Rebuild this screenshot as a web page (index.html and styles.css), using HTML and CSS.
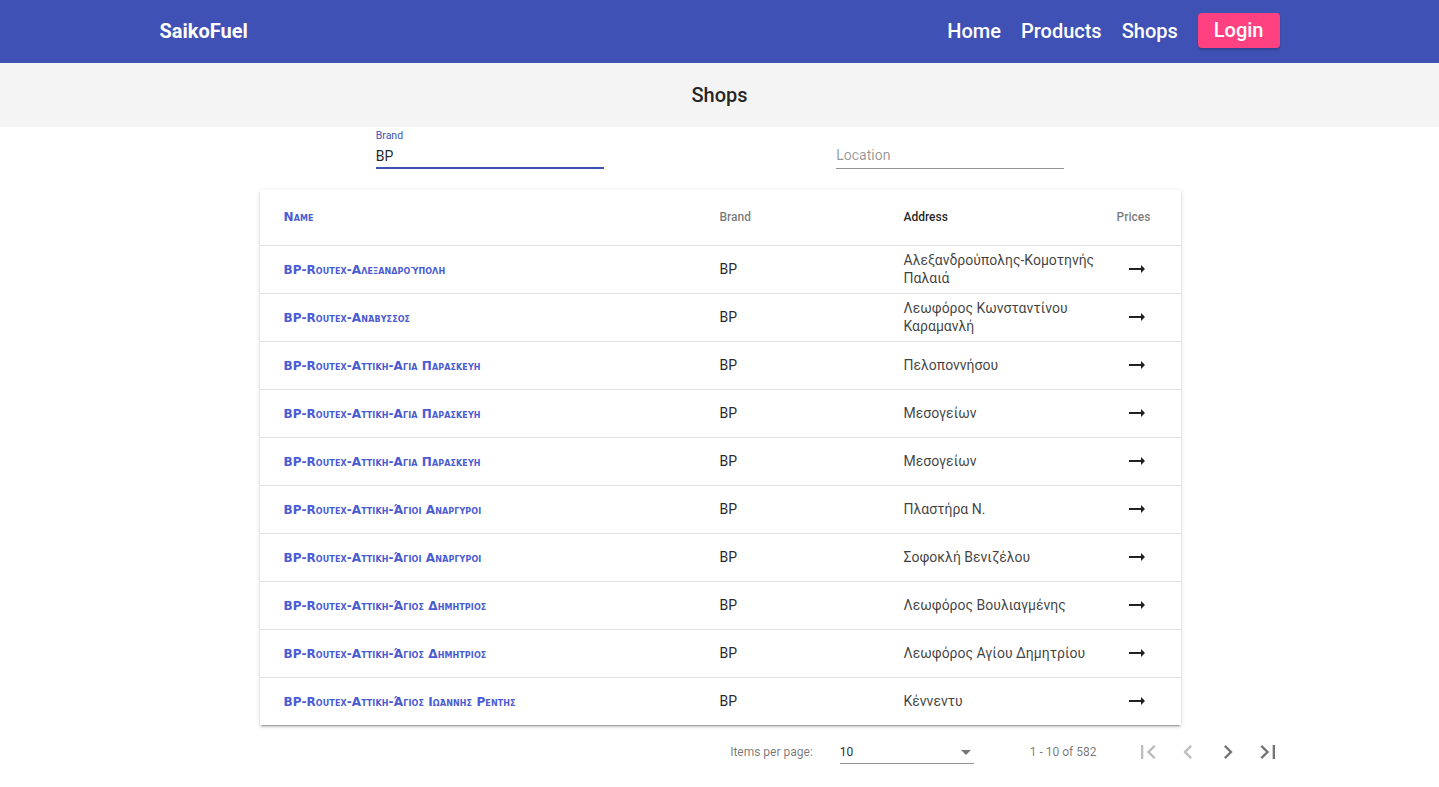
FILE: index.html
```html
<!DOCTYPE html>
<html lang="en">
<head>
<meta charset="utf-8">
<title>SaikoFuel - Shops</title>
<link rel="stylesheet" href="styles.css">
</head>
<body>
<header class="navbar">
  <div class="container nav-inner">
    <a class="brand" href="#">SaikoFuel</a>
    <nav class="nav-links">
      <a href="#">Home</a>
      <a href="#">Products</a>
      <a href="#">Shops</a>
      <a href="#" class="login">Login</a>
    </nav>
  </div>
</header>

<section class="title-band"><h1>Shops</h1></section>

<main class="main">
<div class="filters">
  <div class="filter-cell">
    <div class="field active">
      <span class="field-label">Brand</span>
      <div class="field-input">BP</div>
    </div>
  </div>
  <div class="filter-cell">
    <div class="field">
      <span class="field-label"></span>
      <div class="field-input placeholder">Location</div>
    </div>
  </div>
</div>

<div class="card">
  <table class="shops">
    <colgroup>
      <col class="c-name"><col class="c-brand"><col class="c-addr"><col class="c-price">
    </colgroup>
    <thead>
      <tr>
        <th class="h-name">Name</th>
        <th class="h-brand">Brand</th>
        <th class="h-addr">Address</th>
        <th class="h-price">Prices</th>
      </tr>
    </thead>
    <tbody>
      <tr><td class="name"><a href="#">BP-Routex-Αλεξανδρούπολη</a></td><td>BP</td><td class="addr">Αλεξανδρούπολης-Κομοτηνής Παλαιά</td><td class="price"><svg viewBox="0 0 24 24"><path d="M16.01 11H4v2h12.01v3L20 12l-3.99-4z"/></svg></td></tr>
      <tr><td class="name"><a href="#">BP-Routex-Ανάβυσσος</a></td><td>BP</td><td class="addr">Λεωφόρος Κωνσταντίνου Καραμανλή</td><td class="price"><svg viewBox="0 0 24 24"><path d="M16.01 11H4v2h12.01v3L20 12l-3.99-4z"/></svg></td></tr>
      <tr><td class="name"><a href="#">BP-Routex-Αττικη-Αγια Παρασκευη</a></td><td>BP</td><td class="addr">Πελοποννήσου</td><td class="price"><svg viewBox="0 0 24 24"><path d="M16.01 11H4v2h12.01v3L20 12l-3.99-4z"/></svg></td></tr>
      <tr><td class="name"><a href="#">BP-Routex-Αττικη-Αγια Παρασκευη</a></td><td>BP</td><td class="addr">Μεσογείων</td><td class="price"><svg viewBox="0 0 24 24"><path d="M16.01 11H4v2h12.01v3L20 12l-3.99-4z"/></svg></td></tr>
      <tr><td class="name"><a href="#">BP-Routex-Αττικη-Αγια Παρασκευη</a></td><td>BP</td><td class="addr">Μεσογείων</td><td class="price"><svg viewBox="0 0 24 24"><path d="M16.01 11H4v2h12.01v3L20 12l-3.99-4z"/></svg></td></tr>
      <tr><td class="name"><a href="#">BP-Routex-Αττικη-Άγιοι Αναργυροι</a></td><td>BP</td><td class="addr">Πλαστήρα Ν.</td><td class="price"><svg viewBox="0 0 24 24"><path d="M16.01 11H4v2h12.01v3L20 12l-3.99-4z"/></svg></td></tr>
      <tr><td class="name"><a href="#">BP-Routex-Αττικη-Άγιοι Ανάργυροι</a></td><td>BP</td><td class="addr">Σοφοκλή Βενιζέλου</td><td class="price"><svg viewBox="0 0 24 24"><path d="M16.01 11H4v2h12.01v3L20 12l-3.99-4z"/></svg></td></tr>
      <tr><td class="name"><a href="#">BP-Routex-Αττικη-Άγιος Δημητριος</a></td><td>BP</td><td class="addr">Λεωφόρος Βουλιαγμένης</td><td class="price"><svg viewBox="0 0 24 24"><path d="M16.01 11H4v2h12.01v3L20 12l-3.99-4z"/></svg></td></tr>
      <tr><td class="name"><a href="#">BP-Routex-Αττικη-Άγιος Δημητριος</a></td><td>BP</td><td class="addr">Λεωφόρος Αγίου Δημητρίου</td><td class="price"><svg viewBox="0 0 24 24"><path d="M16.01 11H4v2h12.01v3L20 12l-3.99-4z"/></svg></td></tr>
      <tr><td class="name"><a href="#">BP-Routex-Αττικη-Άγιος Ιωάννης Ρεντης</a></td><td>BP</td><td class="addr">Κέννεντυ</td><td class="price"><svg viewBox="0 0 24 24"><path d="M16.01 11H4v2h12.01v3L20 12l-3.99-4z"/></svg></td></tr>
    </tbody>
  </table>
</div>
</main>

<div class="container paginator">
  <span class="pg-label">Items per page:</span>
  <div class="pg-select">
    <span>10</span>
    <span class="caret"></span>
  </div>
  <span class="pg-range">1 - 10 of 582</span>
  <div class="pg-buttons">
    <button class="disabled" aria-label="First page"><svg viewBox="0 0 24 24"><path d="M18.41 16.59L13.82 12l4.59-4.59L17 6l-6 6 6 6zM6 6h2v12H6z"/></svg></button>
    <button class="disabled" aria-label="Previous page"><svg viewBox="0 0 24 24"><path d="M15.41 7.41L14 6l-6 6 6 6 1.41-1.41L10.83 12z"/></svg></button>
    <button aria-label="Next page"><svg viewBox="0 0 24 24"><path d="M10 6L8.59 7.41 13.17 12l-4.58 4.59L10 18l6-6z"/></svg></button>
    <button aria-label="Last page"><svg viewBox="0 0 24 24"><path d="M5.59 7.41L10.18 12l-4.59 4.59L7 18l6-6-6-6zM16 6h2v12h-2z"/></svg></button>
  </div>
</div>
</body>
</html>
```

FILE: styles.css
```css
* { box-sizing: border-box; }
html, body { margin: 0; padding: 0; }
body {
  font-family: Roboto, "Noto Sans", sans-serif;
  color: rgba(0,0,0,.87);
  background: #fff;
  overflow: hidden;
}
a { text-decoration: none; }

.container { width: 1120px; margin: 0 auto; }

.navbar { background: #3f51b5; height: 63px; }
.nav-inner { display: flex; align-items: center; justify-content: space-between; height: 100%; }
.brand { color: #fff; font-weight: 700; font-size: 20px; margin-top: -2px; }
.nav-links { display: flex; align-items: center; gap: 20px; margin-top: -2px; }
.nav-links a { color: #fff; font-size: 20px; font-weight: 500; }
.nav-links .login {
  background: #ff4081;
  border-radius: 4px;
  padding: 0 16px;
  height: 35px;
  line-height: 35px;
  box-shadow: 0 2px 2px rgba(0,0,0,.2);
}

.title-band { background: #f4f4f4; height: 64px; display: flex; align-items: center; justify-content: center; }
.title-band h1 { margin: 0; font-size: 20px; font-weight: 500; color: rgba(0,0,0,.87); }

.main { width: 921px; margin: 0 auto; padding-left: 1px; box-sizing: content-box; }

.filters { width: 921px; display: flex; }
.filter-cell { flex: 1; display: flex; justify-content: center; }
.field { width: 228px; padding-top: 3px; margin-bottom: 20px; }
.field-label { display: block; height: 12px; font-size: 10.5px; line-height: 12px; color: #3f51b5; }
.field-input {
  margin-top: 5px;
  height: 22px;
  font-size: 14px;
  line-height: 18px;
  color: rgba(0,0,0,.87);
  border-bottom: 1px solid rgba(0,0,0,.42);
  margin-bottom: 1px;
}
.field.active .field-input { border-bottom: 2px solid #3f51b5; margin-bottom: 0; }
.field-input.placeholder { color: rgba(0,0,0,.42); line-height: 17px; }

.card {
  width: 921px;
  height: 535px;
  overflow: hidden;
  background: #fff;
  box-shadow: 0 3px 1px -2px rgba(0,0,0,.2), 0 2px 2px 0 rgba(0,0,0,.14), 0 1px 5px 0 rgba(0,0,0,.12);
}
.shops { width: 921px; border-collapse: collapse; table-layout: fixed; }
.c-name { width: 460px; }
.c-brand { width: 184px; }
.c-addr { width: 213px; }
.c-price { width: 64px; }
.shops th {
  height: 55px;
  font-size: 12px;
  font-weight: 500;
  text-align: left;
  color: rgba(0,0,0,.54);
  border-bottom: 1px solid #e0e0e0;
  padding: 0;
}
.shops th.h-name {
  padding-left: 24px;
  font-variant: small-caps;
  font-weight: 700;
  color: #4a5bd4;
  font-family: "DejaVu Sans", sans-serif;
  font-size: 12px;
  letter-spacing: 0.1px;
}
.shops th.h-addr { color: rgba(0,0,0,.87); }
.shops td {
  height: 48px;
  padding: 0;
  font-size: 14px;
  line-height: 18px;
  border-bottom: 1px solid #e0e0e0;
}
.shops td.name { padding-left: 24px; }
.shops td.name a {
  color: #4a5bd4;
  font-family: "DejaVu Sans", sans-serif;
  font-variant: small-caps;
  font-weight: 700;
  font-size: 12px;
  letter-spacing: 0.1px;
}
.shops td.addr { color: rgba(0,0,0,.76); padding-right: 12px; }
.shops td.price svg { width: 24px; height: 24px; display: block; margin-left: 8px; fill: rgba(0,0,0,.87); }

.paginator {
  height: 54px;
  display: flex;
  align-items: center;
  justify-content: flex-end;
  font-size: 12px;
  color: rgba(0,0,0,.54);
  padding-right: 0;
  position: relative;
  left: 8px;
}
.pg-label { margin-right: 27px; }
.pg-select {
  width: 134px;
  height: 23px;
  display: flex;
  align-items: center;
  justify-content: space-between;
  border-bottom: 1px solid rgba(0,0,0,.42);
  color: rgba(0,0,0,.87);
  padding-top: 1px;
}
.caret {
  width: 0; height: 0;
  border-left: 5px solid transparent;
  border-right: 5px solid transparent;
  border-top: 5px solid rgba(0,0,0,.54);
  margin-right: 3px;
}
.pg-range { margin-left: 56px; margin-right: 31px; }
.pg-buttons { display: flex; }
.pg-buttons button {
  width: 40px; height: 40px;
  border: 0; background: none; padding: 0;
  display: flex; align-items: center; justify-content: center;
}
.pg-buttons svg { width: 28px; height: 28px; fill: rgba(0,0,0,.54); }
.pg-buttons .disabled svg { fill: rgba(0,0,0,.26); }
```
